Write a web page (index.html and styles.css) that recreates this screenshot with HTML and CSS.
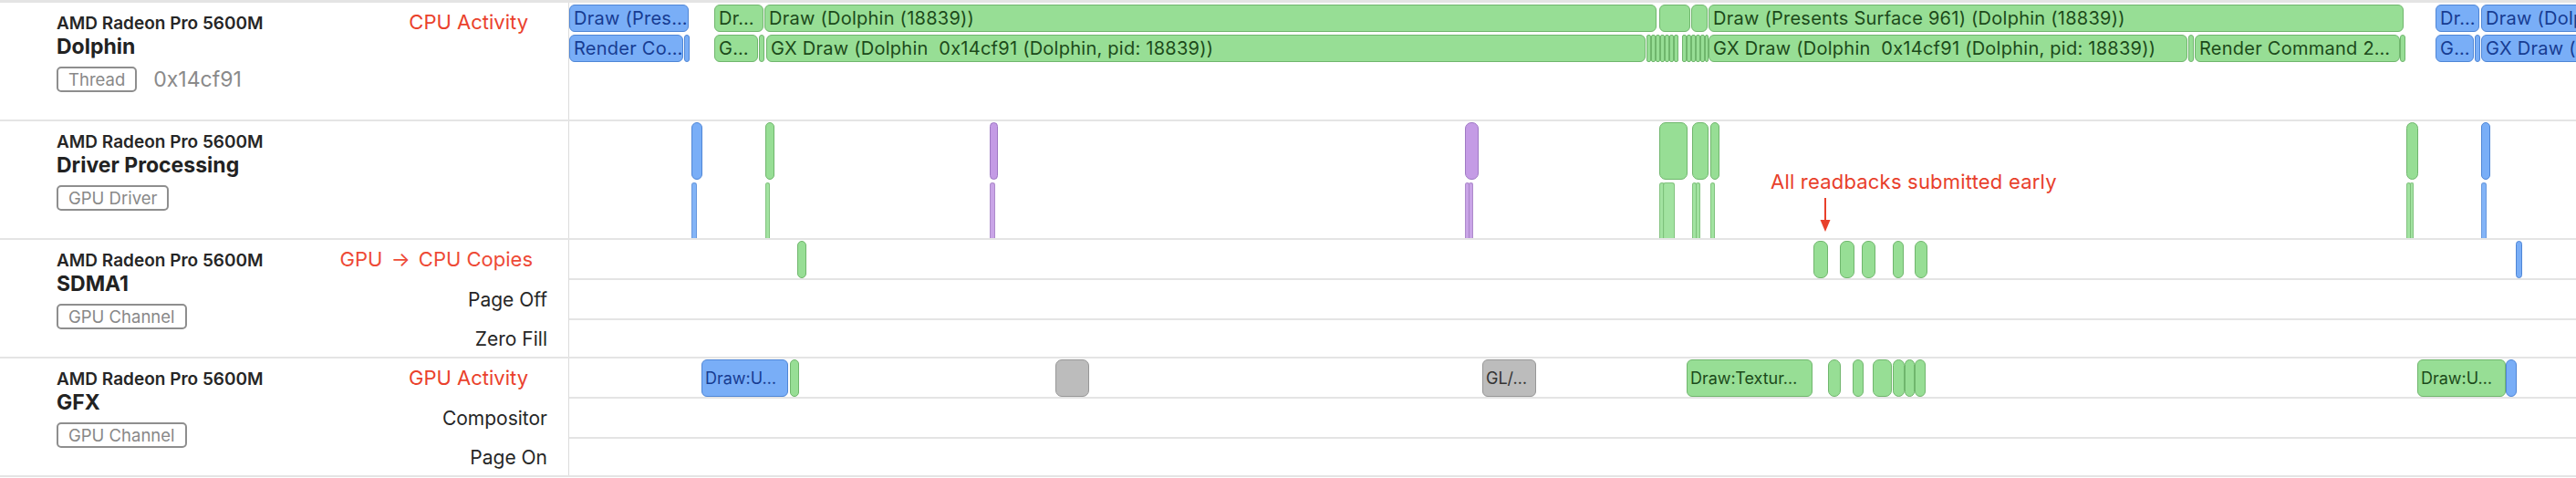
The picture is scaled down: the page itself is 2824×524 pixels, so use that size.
FILE: index.html
```html
<!DOCTYPE html>
<html>
<head>
<meta charset="utf-8">
<link rel="stylesheet" href="styles.css">
</head>
<body>
<div class="tracks">
  <section class="track">
    <div class="label">
      <div class="ident">
        <div class="device">AMD Radeon Pro 5600M</div>
        <div class="name">Dolphin</div>
        <div class="meta"><span class="badge">Thread</span><span class="tid">0x14cf91</span></div>
      </div>
      <div class="side">
        <div class="note">CPU Activity</div>
      </div>
    </div>
    <div class="timeline t-thread">
      <div class="lane l30">
        <div class="bar blue" style="left:0;width:131px">Draw (Pres…</div>
        <div class="bar green" style="left:159px;width:54px">Dr…</div>
        <div class="bar green" style="left:214px;width:978px">Draw (Dolphin (18839))</div>
        <div class="bar green" style="left:1195px;width:34px"></div>
        <div class="bar green" style="left:1230px;width:18px"></div>
        <div class="bar green" style="left:1249px;width:762px">Draw (Presents Surface 961) (Dolphin (18839))</div>
        <div class="bar blue" style="left:2046px;width:48px">Dr…</div>
        <div class="bar blue" style="left:2096px;width:140px">Draw (Dolphin (18839))</div>
      </div>
      <div class="lane l30">
        <div class="bar blue" style="left:0;width:125px">Render Co…</div>
        <div class="bar blue" style="left:126px;width:4px"></div>
        <div class="bar green" style="left:159px;width:48px">G…</div>
        <div class="bar green" style="left:208px;width:5px"></div>
        <div class="bar green" style="left:216px;width:964px">GX Draw (Dolphin&nbsp; 0x14cf91 (Dolphin, pid: 18839))</div>
        <div class="bar green sliver" style="left:1181px;width:5px"></div>
        <div class="bar green sliver" style="left:1186px;width:5px"></div>
        <div class="bar green sliver" style="left:1191px;width:5px"></div>
        <div class="bar green sliver" style="left:1196px;width:5px"></div>
        <div class="bar green sliver" style="left:1201px;width:5px"></div>
        <div class="bar green sliver" style="left:1206px;width:5px"></div>
        <div class="bar green sliver" style="left:1211px;width:5px"></div>
        <div class="bar green sliver" style="left:1220px;width:5px"></div>
        <div class="bar green sliver" style="left:1225px;width:5px"></div>
        <div class="bar green sliver" style="left:1230px;width:5px"></div>
        <div class="bar green sliver" style="left:1235px;width:5px"></div>
        <div class="bar green sliver" style="left:1240px;width:5px"></div>
        <div class="bar green sliver" style="left:1245px;width:4px"></div>
        <div class="bar green" style="left:1249px;width:525px">GX Draw (Dolphin&nbsp; 0x14cf91 (Dolphin, pid: 18839))</div>
        <div class="bar green" style="left:1775px;width:4px"></div>
        <div class="bar green" style="left:1782px;width:225px">Render Command 2…</div>
        <div class="bar green" style="left:2007px;width:4px"></div>
        <div class="bar blue" style="left:2046px;width:42px">G…</div>
        <div class="bar blue" style="left:2089px;width:5px"></div>
        <div class="bar blue" style="left:2096px;width:140px">GX Draw (Dolphin</div>
      </div>
    </div>
  </section>

  <section class="track">
    <div class="label">
      <div class="ident">
        <div class="device">AMD Radeon Pro 5600M</div>
        <div class="name">Driver Processing</div>
        <div class="meta"><span class="badge">GPU Driver</span></div>
      </div>
      <div class="side"></div>
    </div>
    <div class="timeline t-driver">
      <div class="lane l63">
        <div class="pill blue" style="left:134px;width:12px"></div>
        <div class="pill green" style="left:215px;width:10px"></div>
        <div class="pill purple" style="left:461px;width:9px"></div>
        <div class="pill purple" style="left:982px;width:15px"></div>
        <div class="pill green" style="left:1195px;width:31px"></div>
        <div class="pill green" style="left:1231px;width:18px"></div>
        <div class="pill green" style="left:1251px;width:10px"></div>
        <div class="pill green" style="left:2014px;width:13px"></div>
        <div class="pill blue" style="left:2096px;width:10px"></div>
      </div>
      <div class="lane l61">
        <div class="line blue" style="left:134px;width:6px"></div>
        <div class="line green" style="left:215px;width:5px"></div>
        <div class="line purple" style="left:461px;width:6px"></div>
        <div class="line purple" style="left:982px;width:5px"></div>
        <div class="line purple" style="left:986px;width:5px"></div>
        <div class="line green" style="left:1195px;width:6px"></div>
        <div class="line green" style="left:1199px;width:13px"></div>
        <div class="line green" style="left:1231px;width:5px"></div>
        <div class="line green" style="left:1235px;width:5px"></div>
        <div class="line green" style="left:1251px;width:5px"></div>
        <div class="line green" style="left:2014px;width:5px"></div>
        <div class="line green" style="left:2018px;width:4px"></div>
        <div class="line blue" style="left:2096px;width:6px"></div>
      </div>
      <div class="callout">All readbacks submitted early</div>
      <svg class="arrow" width="14" height="38" viewBox="0 0 14 38"><line x1="7" y1="0" x2="7" y2="26" stroke="#e8402b" stroke-width="2"/><path d="M1.5 24 L12.5 24 L7 37 Z" fill="#e8402b"/></svg>
    </div>
  </section>

  <section class="track">
    <div class="label">
      <div class="ident">
        <div class="device">AMD Radeon Pro 5600M</div>
        <div class="name">SDMA1</div>
        <div class="meta"><span class="badge">GPU Channel</span></div>
      </div>
      <div class="side split">
        <div class="note wide">GPU <span class="arr">→</span> CPU Copies</div>
        <div class="sub">Page Off</div>
        <div class="sub last">Zero Fill</div>
      </div>
    </div>
    <div class="timeline t-channel">
      <div class="lane main">
        <div class="pill green" style="left:250px;width:10px"></div>
        <div class="pill green" style="left:1364px;width:16px"></div>
        <div class="pill green" style="left:1393px;width:16px"></div>
        <div class="pill green" style="left:1417px;width:15px"></div>
        <div class="pill green" style="left:1451px;width:12px"></div>
        <div class="pill green" style="left:1475px;width:14px"></div>
        <div class="pill blue" style="left:2134px;width:7px"></div>
      </div>
      <div class="lane subl"></div>
      <div class="lane subl last"></div>
    </div>
  </section>

  <section class="track">
    <div class="label">
      <div class="ident">
        <div class="device">AMD Radeon Pro 5600M</div>
        <div class="name">GFX</div>
        <div class="meta"><span class="badge">GPU Channel</span></div>
      </div>
      <div class="side split">
        <div class="note">GPU Activity</div>
        <div class="sub">Compositor</div>
        <div class="sub last">Page On</div>
      </div>
    </div>
    <div class="timeline t-channel">
      <div class="lane main">
        <div class="bar blue tall" style="left:145px;width:95px">Draw:U…</div>
        <div class="pill green" style="left:242px;width:10px"></div>
        <div class="pill gray" style="left:533px;width:37px"></div>
        <div class="bar gray tall" style="left:1001px;width:59px">GL/…</div>
        <div class="bar green tall" style="left:1225px;width:138px">Draw:Textur…</div>
        <div class="pill green" style="left:1380px;width:14px"></div>
        <div class="pill green" style="left:1407px;width:12px"></div>
        <div class="pill green" style="left:1429px;width:21px"></div>
        <div class="pill green" style="left:1451px;width:13px"></div>
        <div class="pill green" style="left:1464px;width:11px"></div>
        <div class="pill green" style="left:1475px;width:12px"></div>
        <div class="bar green tall" style="left:2026px;width:97px">Draw:U…</div>
        <div class="pill blue" style="left:2123px;width:12px"></div>
      </div>
      <div class="lane subl"></div>
      <div class="lane subl last"></div>
    </div>
  </section>
</div>
</body>
</html>
```

FILE: styles.css
```css
* { box-sizing: border-box; margin: 0; padding: 0; }
html, body { background: #ffffff; }
body {
  width: 2824px;
  height: 524px;
  overflow: hidden;
  font-family: Inter, "Liberation Sans", sans-serif;
  color: #242424;
}

.tracks { border-top: 3px solid #e4e4e4; }

.track {
  display: flex;
  height: 130px;
  border-bottom: 2px solid #e4e4e4;
}

.label {
  width: 624px;
  flex: none;
  border-right: 1px solid #dcdcdc;
  display: flex;
  justify-content: space-between;
}

.ident { padding: 12px 0 0 62px; }

.device {
  font-size: 19px;
  font-weight: 600;
  line-height: 22px;
  color: #262626;
}

.name {
  font-size: 23px;
  font-weight: 700;
  line-height: 27px;
  margin-top: 1px;
  color: #222;
}

.meta {
  display: flex;
  align-items: center;
  gap: 18px;
  margin-top: 8px;
}

.badge {
  display: inline-flex;
  align-items: center;
  height: 28px;
  padding: 0 11px;
  border: 2px solid #8e8e8e;
  border-radius: 5px;
  font-size: 18.5px;
  color: #888;
}

.tid {
  font-size: 23px;
  line-height: 28px;
  color: #8a8a8a;
}

.side {
  display: flex;
  flex-direction: column;
  align-items: flex-end;
  padding-right: 23px;
}

.note {
  height: 44px;
  padding-top: 9px;
  margin-right: 21px;
  font-size: 22px;
  line-height: 25px;
  color: #ea412c;
  white-space: nowrap;
}

.note.wide { margin-right: 16px; color: #ee4a36; }
.arr { margin: 0 3px; }

.sub {
  height: 44px;
  display: flex;
  align-items: center;
  padding-bottom: 2px;
  font-size: 21px;
  color: #262626;
}

.sub.last { height: 40px; padding-bottom: 0; }

.timeline {
  flex: 1;
  position: relative;
  overflow: hidden;
  display: flex;
  flex-direction: column;
}

.t-thread { padding-top: 2px; gap: 3px; }
.t-driver { padding-top: 1px; gap: 3px; }

.lane { position: relative; flex: none; }
.l30 { height: 30px; }
.l63 { height: 63px; }
.l61 { height: 61px; }

.lane.main { height: 44px; border-bottom: 2px solid #e4e4e4; }
.lane.subl { height: 44px; border-bottom: 2px solid #e4e4e4; }
.lane.subl.last { height: 40px; border-bottom: 0; }

.bar, .pill, .line {
  position: absolute;
  top: 0;
  bottom: 0;
  border: 1px solid;
  border-radius: 6px;
  overflow: hidden;
  white-space: nowrap;
  font-size: 20px;
  letter-spacing: 0.25px;
  line-height: 28px;
  padding-left: 4px;
}

.bar.tall, .lane.main .pill { top: 1px; bottom: 0; }
.bar.tall { line-height: 39px; padding-left: 3px; font-size: 18px; letter-spacing: 0; }

.pill { padding: 0; border-radius: 7px; }

.line {
  padding: 0;
  border-radius: 3px 3px 0 0;
  border-bottom: 0;
  opacity: 0.95;
}

.sliver { padding: 0; border-radius: 2px; }

.green  { background: #97de95; border-color: #70b66d; color: #1c4a1a; }
.blue   { background: #79aef7; border-color: #4f86d6; color: #173c92; }
.purple { background: #c49be5; border-color: #9f79c4; color: #3d1d5e; }
.gray   { background: #bcbcbc; border-color: #979797; color: #333; }

.line.green { background: #9ee29c; border-color: #7cc079; }
.line.blue { background: #7db1f7; border-color: #5f93dd; }
.line.purple { background: #c7a0e6; border-color: #a984c9; }

.callout {
  position: absolute;
  left: 1317px;
  top: 53px;
  font-size: 22px;
  letter-spacing: 0.2px;
  line-height: 26px;
  color: #e8402b;
  white-space: nowrap;
}

.arrow {
  position: absolute;
  left: 1370px;
  top: 84px;
}
```
